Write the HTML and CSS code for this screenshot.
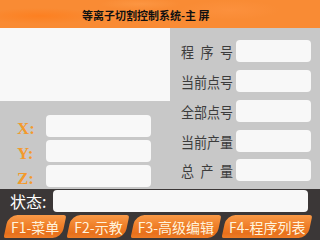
FILE: index.html
```html
<!DOCTYPE html>
<html lang="zh">
<head>
<meta charset="utf-8">
<link rel="stylesheet" href="styles.css">
</head>
<body>
<div class="screen">
  <header class="header">
    <span class="title">等离子切割控制系统-主 屏</span>
  </header>
  <main class="main">
    <section class="left">
      <div class="panel"></div>
      <div class="coords">
        <div class="crow"><span class="clabel">X:</span><div class="field cfield"></div></div>
        <div class="crow"><span class="clabel">Y:</span><div class="field cfield"></div></div>
        <div class="crow"><span class="clabel">Z:</span><div class="field cfield"></div></div>
      </div>
    </section>
    <section class="right">
      <div class="irow"><div class="ilabel"><span>程</span><span>序</span><span>号</span></div><div class="field ifield"></div></div>
      <div class="irow"><div class="ilabel"><span>当</span><span>前</span><span>点</span><span>号</span></div><div class="field ifield"></div></div>
      <div class="irow"><div class="ilabel"><span>全</span><span>部</span><span>点</span><span>号</span></div><div class="field ifield"></div></div>
      <div class="irow"><div class="ilabel"><span>当</span><span>前</span><span>产</span><span>量</span></div><div class="field ifield"></div></div>
      <div class="irow last"><div class="ilabel"><span>总</span><span>产</span><span>量</span></div><div class="field ifield"></div></div>
    </section>
  </main>
  <footer class="bottom">
    <div class="status">
      <span class="slabel">状态:</span>
      <div class="field sfield"></div>
    </div>
    <div class="keys">
      <div class="key">F1-菜单</div>
      <div class="key">F2-示教</div>
      <div class="key">F3-高级编辑</div>
      <div class="key">F4-程序列表</div>
    </div>
  </footer>
</div>
</body>
</html>
```
FILE: styles.css
```css
html, body {
  margin: 0;
  padding: 0;
}
body {
  width: 320px;
  height: 240px;
  overflow: hidden;
  font-family: "Noto Sans CJK SC", "Noto Sans", sans-serif;
}
.screen {
  width: 320px;
  height: 240px;
  display: flex;
  flex-direction: column;
  background: #c8c8c8;
}
.header {
  height: 28px;
  flex: none;
  display: flex;
  align-items: center;
  padding-left: 82px;
  padding-top: 2px;
  box-sizing: border-box;
  background:
    radial-gradient(ellipse 60px 8px at 40px 16px, rgba(255,120,20,0.6), transparent),
    radial-gradient(ellipse 50px 10px at 230px 10px, rgba(255,150,70,0.5), transparent),
    radial-gradient(ellipse 40px 6px at 140px 4px, rgba(255,160,80,0.5), transparent),
    #f98b34;
}
.title {
  font-size: 11px;
  font-weight: bold;
  color: #111;
  line-height: 1;
}
.main {
  height: 161px;
  flex: none;
  display: flex;
}
.left {
  width: 170px;
  flex: none;
  display: flex;
  flex-direction: column;
}
.panel {
  height: 73px;
  background: #f8f8f8;
}
.coords {
  padding-top: 14px;
  display: flex;
  flex-direction: column;
  gap: 3px;
}
.crow {
  display: flex;
  align-items: center;
  height: 22px;
}
.clabel {
  width: 29px;
  padding-left: 17px;
  font-family: "Liberation Serif", serif;
  font-weight: bold;
  font-size: 17px;
  color: #f39a2c;
  line-height: 1;
  padding-top: 5px;
}
.field {
  background: #f8f8f8;
  border-radius: 4px;
}
.cfield {
  width: 105px;
  height: 22px;
}
.right {
  padding-left: 11px;
  padding-top: 12px;
  display: flex;
  flex-direction: column;
  gap: 8px;
}
.irow {
  display: flex;
  align-items: center;
  height: 22px;
}
.irow.last {
  margin-top: -1px;
}
.ilabel {
  width: 52px;
  margin-right: 3px;
  display: flex;
  justify-content: space-between;
  font-size: 13px;
  color: #3c3c3c;
  line-height: 1;
  transform: scaleY(1.15);
}
.ilabel span {
  width: 13px;
  display: flex;
  justify-content: center;
}
.ifield {
  width: 75px;
  height: 22px;
}
.bottom {
  flex: 1;
  background: #3b3737;
  display: flex;
  flex-direction: column;
}
.status {
  margin-top: 1px;
  height: 22px;
  display: flex;
  align-items: center;
}
.slabel {
  width: 43px;
  padding-left: 10px;
  font-size: 16px;
  color: #ffffff;
  line-height: 1;
}
.sfield {
  width: 255px;
  height: 22px;
}
.keys {
  margin-top: 3px;
  height: 23px;
  display: flex;
  padding-left: 6px;
  gap: 5px;
}
.key {
  position: relative;
  height: 23px;
  padding: 0 5px 0 5px;
  display: flex;
  align-items: center;
  font-size: 14px;
  color: #fff3dc;
  line-height: 1;
  z-index: 0;
}
.key::before {
  content: "";
  position: absolute;
  inset: 0;
  z-index: -1;
  transform: skewX(-12deg);
  border-radius: 9px 3px 9px 2px;
  background: linear-gradient(#f99a48, #f0802a 45%, #e8701c 80%, #ee7c26);
}
```
